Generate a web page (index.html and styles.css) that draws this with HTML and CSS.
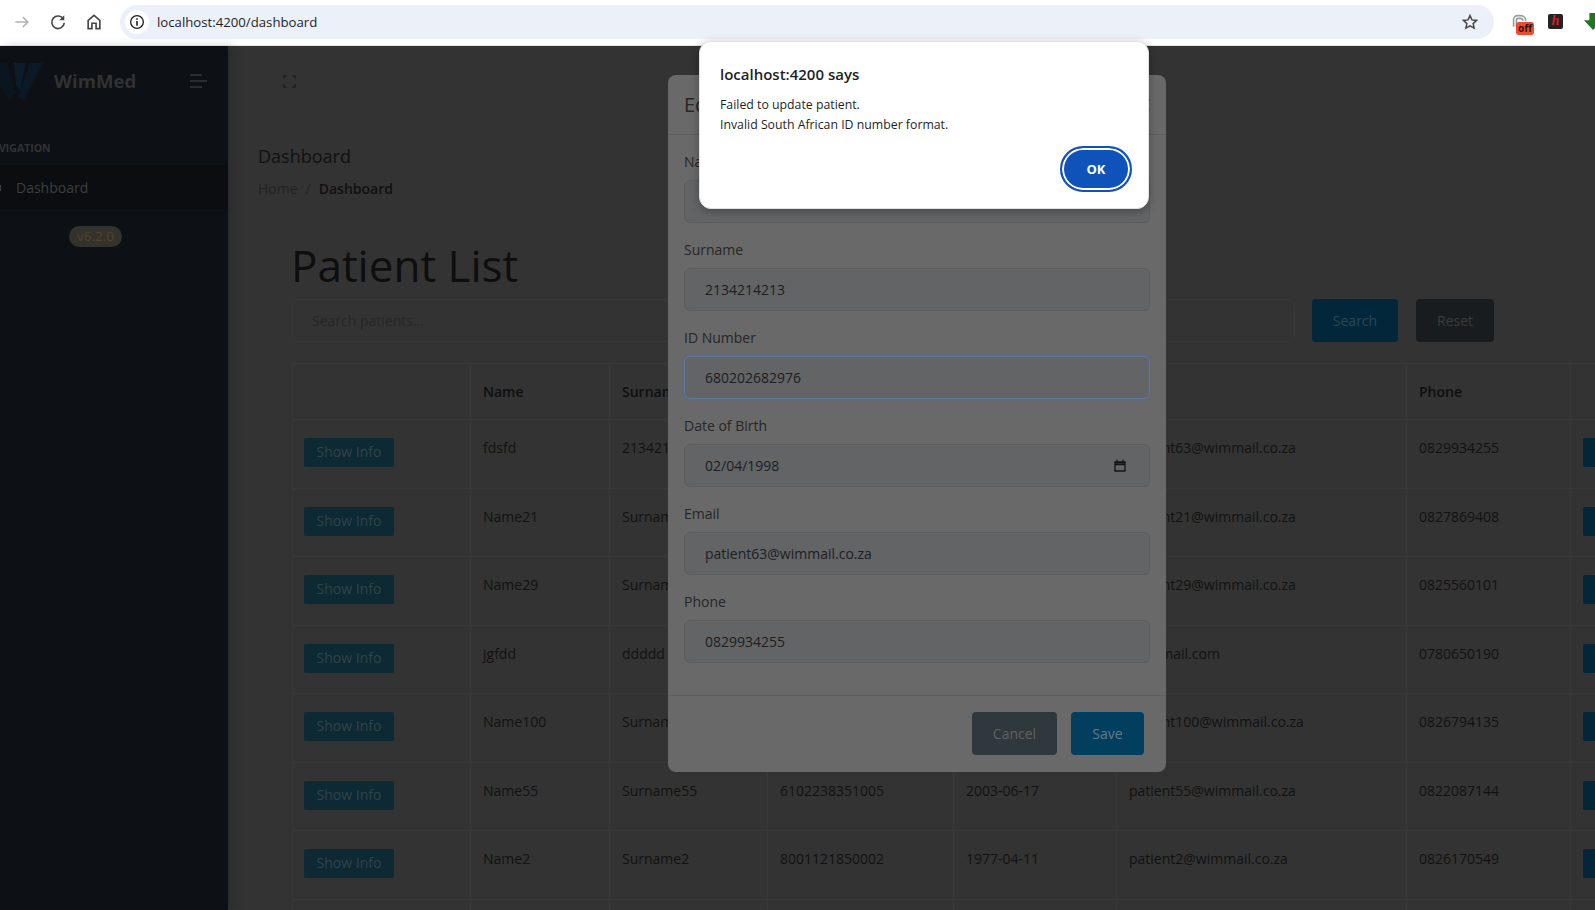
FILE: index.html
```html
<!DOCTYPE html>
<html lang="en">
<head>
<meta charset="utf-8">
<title>WimMed</title>
<link rel="stylesheet" href="styles.css">
</head>
<body>
<header class="chrome">
  <div class="nav-icons">
    <svg class="ic" viewBox="0 0 24 24"><path d="M4 12h15M13 6l6 6-6 6" fill="none" stroke="#b3b3b3" stroke-width="2"/></svg>
    <svg class="ic" viewBox="0 0 24 24"><path d="M18.5 8.5A7.5 7.5 0 1 0 19.5 13" fill="none" stroke="#474747" stroke-width="2"/><path d="M19.5 4v6h-6z" fill="#474747"/></svg>
    <svg class="ic" viewBox="0 0 24 24"><path d="M5 20V10l7-6 7 6v10h-4.500v-6.500h-5V20z" fill="none" stroke="#474747" stroke-width="2"/></svg>
  </div>
  <div class="omnibox">
    <span class="site-info"><svg viewBox="0 0 24 24" width="16" height="16"><circle cx="12" cy="12" r="9.500" fill="none" stroke="#1f1f1f" stroke-width="2"/><path d="M12 10.500v7M12 6.500v2" stroke="#1f1f1f" stroke-width="2.400"/></svg></span>
    <span class="url">localhost:4200/dashboard</span>
    <svg class="star" viewBox="0 0 24 24" width="18" height="18"><path d="M12 3.500l2.600 5.700 6.200.7-4.600 4.200 1.300 6.100-5.500-3.100-5.500 3.100 1.300-6.100-4.600-4.200 6.200-.7z" fill="none" stroke="#474747" stroke-width="2"/></svg>
  </div>
  <div class="extensions">
    <span class="ext-off">
      <svg viewBox="0 0 20 20" width="16" height="18"><path d="M2 16V7a5 5 0 0 1 5-5h4a6 6 0 0 1 6 6v1M5.500 16V7.500a2 2 0 0 1 2-2h3a3 3 0 0 1 3 3" fill="none" stroke="#9a9a9a" stroke-width="2"/></svg>
      <span class="off-badge">off</span>
    </span>
    <span class="ext-h">h</span>
    <svg class="ext-arrow" viewBox="0 0 20 20" width="18" height="18"><path d="M6 0h8v8h6L10 19 0 8h6z" fill="#1c7a1c"/></svg>
  </div>
</header>

<div class="app">
  <aside class="sidebar">
    <div class="brand">
      <svg class="logo" viewBox="0 0 44 40" width="44" height="40"><path d="M0 2h7l9 30-7 6-9-12z" fill="#0a1520"/><path d="M14 2h12l-6 28-4-6z" fill="#0c1c2b"/><path d="M30 2h13L24 39l-6-3z" fill="#0b1826"/></svg>
      <span class="brand-name">WimMed</span>
      <span class="burger"><i class="b1"></i><i class="b2"></i><i class="b3"></i></span>
    </div>
    <div class="nav-label">VIGATION</div>
    <div class="nav-item"><span class="nav-dot"></span>Dashboard</div>
    <div class="version-row"><span class="version">v6.2.0</span></div>
  </aside>

  <main class="main">
    <div class="topbar">
      <svg viewBox="0 0 14 14" width="13" height="13"><path d="M1 4V1h3M10 1h3v3M13 10v3h-3M4 13H1v-3" fill="none" stroke="#1d1d1d" stroke-width="1.300"/></svg>
    </div>
    <div class="crumbs">
      <div class="page-title">Dashboard</div>
      <div class="breadcrumb"><span class="bc-home">Home</span><span class="bc-sep">/</span><b>Dashboard</b></div>
    </div>
    <section class="content">
      <h1 class="heading">Patient List</h1>
      <div class="search-row">
        <div class="search-box">Search patients...</div>
        <span class="btn btn-search">Search</span>
        <span class="btn btn-reset">Reset</span>
      </div>
      <table class="patients">
        <colgroup>
          <col class="c1"><col class="c2"><col class="c3"><col class="c4"><col class="c5"><col class="c6"><col class="c7"><col class="c8">
        </colgroup>
        <thead>
          <tr><th></th><th>Name</th><th>Surname</th><th>ID Number</th><th>Date of Birth</th><th>Email</th><th>Phone</th><th></th></tr>
        </thead>
        <tbody>
          <tr><td><span class="show-info">Show Info</span></td><td>fdsfd</td><td>2134214213</td><td></td><td></td><td>patient63@wimmail.co.za</td><td>0829934255</td><td><span class="edit"></span></td></tr>
          <tr><td><span class="show-info">Show Info</span></td><td>Name21</td><td>Surname21</td><td></td><td></td><td>patient21@wimmail.co.za</td><td>0827869408</td><td><span class="edit"></span></td></tr>
          <tr><td><span class="show-info">Show Info</span></td><td>Name29</td><td>Surname29</td><td></td><td></td><td>patient29@wimmail.co.za</td><td>0825560101</td><td><span class="edit"></span></td></tr>
          <tr><td><span class="show-info">Show Info</span></td><td>jgfdd</td><td>ddddd</td><td></td><td></td><td>jg@gmail.com</td><td>0780650190</td><td><span class="edit"></span></td></tr>
          <tr><td><span class="show-info">Show Info</span></td><td>Name100</td><td>Surname100</td><td></td><td></td><td>patient100@wimmail.co.za</td><td>0826794135</td><td><span class="edit"></span></td></tr>
          <tr><td><span class="show-info">Show Info</span></td><td>Name55</td><td>Surname55</td><td>6102238351005</td><td>2003-06-17</td><td>patient55@wimmail.co.za</td><td>0822087144</td><td><span class="edit"></span></td></tr>
          <tr><td><span class="show-info">Show Info</span></td><td>Name2</td><td>Surname2</td><td>8001121850002</td><td>1977-04-11</td><td>patient2@wimmail.co.za</td><td>0826170549</td><td><span class="edit"></span></td></tr>
          <tr><td></td><td></td><td></td><td></td><td></td><td></td><td></td><td></td></tr>
        </tbody>
      </table>
    </section>
  </main>
</div>

<div class="modal">
  <div class="modal-head"><span class="modal-title">Edit Patient</span><svg viewBox="0 0 12 12" width="12" height="12"><path d="M.5.5l11 11M11.500.5l-11 11" stroke="#3a3a3a" stroke-width="1.400"/></svg></div>
  <div class="modal-body">
    <div class="field"><label>Name</label><div class="input">fdsfd</div></div>
    <div class="field"><label>Surname</label><div class="input">2134214213</div></div>
    <div class="field"><label>ID Number</label><div class="input focus">680202682976</div></div>
    <div class="field"><label>Date of Birth</label><div class="input date">02/04/1998
      <svg viewBox="0 0 12 13" width="12" height="13"><path d="M1 3h10v9H1zM1 4h10v1.600H1zM3 .8v2.200M9 .8v2.200" fill="none" stroke="#141414" stroke-width="1.300"/></svg></div></div>
    <div class="field"><label>Email</label><div class="input">patient63@wimmail.co.za</div></div>
    <div class="field"><label>Phone</label><div class="input">0829934255</div></div>
  </div>
  <div class="modal-foot">
    <span class="btn btn-cancel">Cancel</span>
    <span class="btn btn-save">Save</span>
  </div>
</div>

<div class="alert">
  <div class="alert-title">localhost:4200 says</div>
  <div class="alert-msg">Failed to update patient.<br>Invalid South African ID number format.</div>
  <div class="alert-actions"><span class="ok">OK</span></div>
</div>
</body>
</html>
```
FILE: styles.css
```css
* { box-sizing: border-box; }
html, body { margin: 0; height: 100%; overflow: hidden; }
body {
  width: 1595px; height: 910px; display: flex; flex-direction: column;
  font-family: "Open Sans", "Noto Sans", sans-serif; font-size: 14px;
  background: #333; color: #1c1c1c; position: relative;
}

/* Browser chrome */
.chrome { height: 46px; flex: none; background: #fff; border-bottom: 1px solid #e4e4e4; display: flex; align-items: flex-start; padding-top: 5px; }
.nav-icons { display: flex; gap: 16px; padding: 7px 0 0 12px; width: 120px; }
.ic { width: 20px; height: 20px; }
.omnibox { width: 1374px; height: 34px; border-radius: 17px; background: #ebf0f9; display: flex; align-items: center; padding: 0 15px 0 5px; }
.site-info { width: 24px; height: 24px; border-radius: 50%; background: #fff; display: flex; align-items: center; justify-content: center; }
.url { margin-left: 8px; font-size: 13.200px; color: #1f1f1f; flex: 1; }
.star { flex: none; }
.extensions { display: flex; align-items: flex-start; position: relative; flex: 1; }
.ext-off { position: absolute; left: 18px; top: 8px; }
.off-badge { position: absolute; left: 4px; top: 9px; width: 18px; height: 13px; border-radius: 3px; background: #f0492e; color: #1b1b1b; font-size: 10px; font-weight: 700; line-height: 12px; text-align: center; }
.ext-h { position: absolute; left: 54px; top: 9px; width: 15px; height: 15px; border-radius: 2px; background: #232323; color: #d81f26; font: italic 700 14px/14px "Liberation Serif", serif; text-align: center; }
.ext-arrow { position: absolute; left: 90px; top: 8px; }

/* App */
.app { flex: 1; display: flex; min-height: 0; }
.sidebar { width: 228px; flex: none; background: #0d1014; color: #3a3d40; box-shadow: 6px 0 10px rgba(0,0,0,.15); }
.brand { height: 70px; display: flex; align-items: center; position: relative; }
.logo { flex: none; }
.brand-name { margin-left: 10px; font-size: 18.600px; font-weight: 700; line-height: 24px; color: #303234; }
.burger { margin-left: 54px; display: flex; flex-direction: column; gap: 4px; }
.burger i { display: block; height: 2px; background: #2a2e31; }
.b1 { width: 12px; }
.b2 { width: 17px; }
.b3 { width: 12px; }
.nav-label { margin-top: 25px; font-size: 10.500px; font-weight: 700; line-height: 14px; color: #303337; margin-left: -1px; }
.nav-item { margin-top: 10px; height: 44px; background: #0b0d10; display: flex; align-items: center; font-size: 14px; padding-left: 16px; color: #3c3f42; position: relative; }
.nav-dot { position: absolute; left: 0; top: 20px; width: 1px; height: 6px; background: #3c3f42; }
.version-row { margin-top: 17px; padding-left: 69px; display: flex; }
.version { height: 21px; padding: 0 8px; border-radius: 11px; background: #34322c; color: #50442a; font-size: 13.500px; line-height: 20px; }

.main { flex: 1; min-width: 0; display: flex; flex-direction: column; }
.topbar { height: 70px; padding: 27px 0 0 55px; flex: none; }
.crumbs { padding: 28px 0 0 30px; }
.page-title { font-size: 18px; line-height: 24px; color: #111; }
.breadcrumb { margin-top: 11px; line-height: 20px; display: flex; gap: 8px; color: #111; }
.bc-home, .bc-sep { color: #232323; }
.breadcrumb b { font-weight: 600; }

.content { padding: 0 0 0 64px; }
.heading { margin: 38px 0 0 -1px; font-size: 44px; font-weight: 400; line-height: 56px; color: #0e0e0e; }
.search-row { margin-top: 6px; display: flex; align-items: stretch; height: 43px; }
.search-box { width: 1003px; border: 1px solid #383838; border-radius: 6px; padding-left: 19px; line-height: 41px; color: #262626; }
.btn { display: flex; align-items: center; justify-content: center; border-radius: 4px; font-size: 14px; height: 43px; }
.btn-search { margin-left: 17px; width: 86px; background: #02263a; color: #2b4654; }
.btn-reset { margin-left: 18px; width: 78px; background: #181c1f; color: #393c3e; }

.patients { margin-top: 21px; border-collapse: collapse; table-layout: fixed; width: 1380px; }
.c1 { width: 178px; }
.c2 { width: 139px; }
.c3 { width: 158px; }
.c4 { width: 186px; }
.c5 { width: 163px; }
.c6 { width: 290px; }
.c7 { width: 164px; }
.c8 { width: 102px; }
.patients th, .patients td { border: 1px solid #383838; padding: 0 12px; text-align: left; vertical-align: top; }
.patients th { height: 56px; font-weight: 600; vertical-align: middle; color: #0f0f0f; }
.patients td { height: 68.500px; padding-top: 18px; line-height: 20px; color: #121212; }
.patients td:first-child { padding-left: 11px; }
.show-info { display: block; width: 90px; height: 29px; border-radius: 2px; background: #0d2934; color: #31434a; text-align: center; line-height: 28px; }
.edit { display: block; width: 60px; height: 29px; border-radius: 2px; background: #02263a; }

/* Edit dialog */
.modal { position: absolute; left: 668px; top: 75px; width: 498px; height: 697px; background: #696969; border-radius: 8px; display: flex; flex-direction: column; color: #262626; }
.modal-head { height: 60px; flex: none; border-bottom: 1px solid #5e5e5e; display: flex; align-items: center; justify-content: space-between; padding: 0 16px; }
.modal-title { font-size: 20px; }
.modal-body { flex: 1; padding: 17px 16px 0; display: flex; flex-direction: column; gap: 17px; }
.field label { display: block; line-height: 20px; margin-bottom: 8px; font-size: 14px; }
.input { height: 43px; border: 1px solid #5c5d5f; border-radius: 6px; background: #626466; padding-left: 20px; line-height: 41px; color: #1e1e1e; display: flex; align-items: center; }
.input.focus { border-color: #63789a; box-shadow: 0 0 0 2px #62687a; }
.input.date { justify-content: space-between; padding-right: 23px; }
.modal-foot { height: 77px; flex: none; border-top: 1px solid #5e5e5e; display: flex; justify-content: flex-end; align-items: center; gap: 14px; padding: 0 22px 2px 0; }
.btn-cancel { width: 85px; background: #2f383c; color: #5e6263; }
.btn-save { width: 73px; background: #023f5f; color: #5f7d8d; }

/* Browser alert */
.alert { position: absolute; left: 699px; top: 41px; width: 450px; height: 168px; background: #fff; border: 1px solid #e2e2e2; border-radius: 12px; box-shadow: 0 2px 8px rgba(0,0,0,.3); padding: 20px 20px 0; color: #1f1f1f; }
.alert-title { font-size: 15px; font-weight: 600; line-height: 24px; }
.alert-msg { margin-top: 9px; font-size: 12.300px; line-height: 20px; }
.alert-actions { display: flex; justify-content: flex-end; margin: 11px -4px 0 0; }
.ok { width: 72px; height: 46px; border-radius: 23px; background: #0f52ba; border: 2px solid #0f52ba; box-shadow: inset 0 0 0 2px #fff; color: #fff; font-size: 13px; font-weight: 700; display: flex; align-items: center; justify-content: center; }
```
